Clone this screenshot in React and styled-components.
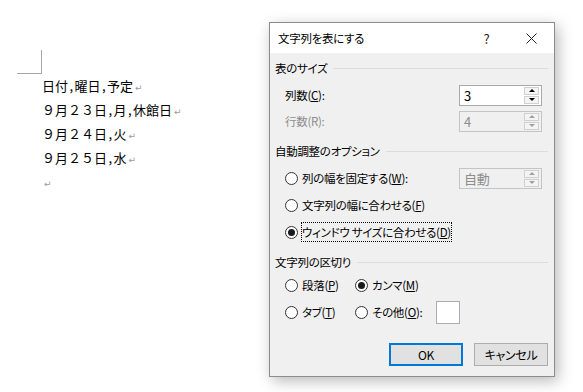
import React from "react";
import styled, { createGlobalStyle } from "styled-components";

const GlobalStyle = createGlobalStyle`
  body {
    margin: 0;
    background: #fff;
    font-family: "Noto Sans CJK JP", "Noto Sans", sans-serif;
  }
`;

const Page = styled.div`
  display: flex;
  align-items: flex-start;
  width: 583px;
  height: 392px;
  overflow: hidden;
`;

const Doc = styled.div`
  width: 269px;
  padding: 50px 0 0 17px;
  box-sizing: border-box;
  font-size: 13px;
  color: #000;
`;

const Corner = styled.div`
  width: 25px;
  height: 24px;
  box-sizing: border-box;
  border-right: 1px solid #a6a6a6;
  border-bottom: 1px solid #a6a6a6;
`;

const Lines = styled.div`
  padding-left: 25px;
`;

const Line = styled.div`
  height: 24px;
  line-height: 24px;
  white-space: nowrap;
`;

const Comma = styled.span`
  display: inline-block;
  width: 6.5px;
  text-align: center;
`;

const Mark = styled.span`
  color: #9a9a9a;
  font-family: "DejaVu Sans", sans-serif;
  font-size: 9px;
  margin-left: 2px;
`;

const Dialog = styled.div`
  margin-top: 22px;
  width: 286px;
  height: 355px;
  box-sizing: border-box;
  border: 1px solid #8c8c8c;
  background: #f0f0f0;
  box-shadow: 3px 4px 14px rgba(0, 0, 0, 0.28);
  display: flex;
  flex-direction: column;
  font-size: 11.5px;
  letter-spacing: -0.3px;
  font-feature-settings: "palt";
  color: #000;
`;

const TitleBar = styled.div`
  height: 30px;
  background: #fff;
  display: flex;
  align-items: center;
  padding-left: 8px;
`;

const TitleText = styled.div`
  flex: 1;
`;

const TitleButton = styled.div`
  width: 45px;
  height: 30px;
  display: flex;
  align-items: center;
  justify-content: center;
  font-size: 13px;
  color: #222;
`;

const Body = styled.div`
  padding: 5px 6px 0 5px;
  display: flex;
  flex-direction: column;
`;

const Heading = styled.div`
  height: 20px;
  margin-top: ${(p) => p.$top || 0}px;
  display: flex;
  align-items: center;
  gap: 6px;
  &::after {
    content: "";
    flex: 1;
    height: 1px;
    background: #dcdcdc;
  }
`;

const Row = styled.div`
  height: ${(p) => p.$h || 22}px;
  margin-top: ${(p) => p.$top || 0}px;
  padding: 0 6px 0 10px;
  display: flex;
  align-items: center;
`;

const Label = styled.div`
  flex: 1;
  color: ${(p) => (p.$disabled ? "#8d8d8d" : "#000")};
`;

const Spin = styled.div`
  width: 83px;
  height: 21px;
  box-sizing: border-box;
  border: 1px solid ${(p) => (p.$disabled ? "#c4c4c4" : "#a9a9a9")};
  background: ${(p) => (p.$disabled ? "#f0f0f0" : "#fff")};
  display: flex;
  align-items: center;
  padding: 1px 1px 1px 4px;
  color: ${(p) => (p.$disabled ? "#8d8d8d" : "#000")};
  font-size: 13px;
`;

const SpinValue = styled.div`
  flex: 1;
`;

const SpinButtons = styled.div`
  width: 15px;
  height: 17px;
  display: flex;
  flex-direction: column;
  gap: 1px;
  margin-right: 1px;
`;

const SpinBtn = styled.div`
  flex: 1;
  box-sizing: border-box;
  border: 1px solid #d0d0d0;
  background: #f4f4f4;
  display: flex;
  align-items: center;
  justify-content: center;
  &::before {
    content: "";
    border-left: 3px solid transparent;
    border-right: 3px solid transparent;
    ${(p) => (p.$down ? "border-top" : "border-bottom")}: 3px solid
      ${(p) => (p.$disabled ? "#a0a0a0" : "#000")};
  }
`;

const Option = styled.div`
  display: flex;
  align-items: center;
  gap: 4px;
  width: ${(p) => (p.$w ? `${p.$w}px` : "auto")};
  flex: ${(p) => (p.$grow ? 1 : "none")};
`;

const Radio = styled.span`
  width: 13px;
  height: 13px;
  box-sizing: border-box;
  border-radius: 50%;
  border: 1px solid #333;
  background: #fff;
  display: flex;
  align-items: center;
  justify-content: center;
  &::after {
    content: "";
    width: 7px;
    height: 7px;
    border-radius: 50%;
    background: ${(p) => (p.$checked ? "#1a1a1a" : "transparent")};
  }
`;

const Focus = styled.span`
  outline: 1px dotted #000;
  padding: 1px 0;
`;

const SmallBox = styled.div`
  width: 24px;
  height: 23px;
  box-sizing: border-box;
  border: 1px solid #abadb3;
  background: #fff;
  margin-left: 14px;
`;

const Buttons = styled.div`
  margin-top: 19px;
  display: flex;
  justify-content: flex-end;
  gap: 11px;
`;

const Button = styled.div`
  width: 74px;
  height: 23px;
  box-sizing: border-box;
  border: ${(p) => (p.$primary ? "2px solid #0078d7" : "1px solid #adadad")};
  background: #e1e1e1;
  display: flex;
  align-items: center;
  justify-content: center;
  font-size: 12px;
`;

function SpinBox({ value, disabled }) {
  return (
    <Spin $disabled={disabled}>
      <SpinValue>{value}</SpinValue>
      <SpinButtons>
        <SpinBtn $disabled={disabled} />
        <SpinBtn $down $disabled={disabled} />
      </SpinButtons>
    </Spin>
  );
}

function DocLine({ text }) {
  const parts = text.split(",");
  return (
    <Line>
      {parts.map((part, i) => (
        <React.Fragment key={i}>
          {i > 0 && <Comma>,</Comma>}
          {part}
        </React.Fragment>
      ))}
      <Mark>↵</Mark>
    </Line>
  );
}

const docLines = ["日付,曜日,予定", "９月２３日,月,休館日", "９月２４日,火", "９月２５日,水", ""];

export default function App() {
  return (
    <Page>
      <GlobalStyle />
      <Doc>
        <Corner />
        <Lines>
          {docLines.map((t, i) => (
            <DocLine key={i} text={t} />
          ))}
        </Lines>
      </Doc>

      <Dialog>
        <TitleBar>
          <TitleText>文字列を表にする</TitleText>
          <TitleButton>?</TitleButton>
          <TitleButton>
            <svg width="11" height="11" viewBox="0 0 11 11">
              <path d="M0.5 0.5 L10.5 10.5 M10.5 0.5 L0.5 10.5" stroke="#222" strokeWidth="1" />
            </svg>
          </TitleButton>
        </TitleBar>
        <Body>
          <Heading>表のサイズ</Heading>
          <Row $top={6}>
            <Label>列数(<u>C</u>):</Label>
            <SpinBox value="3" />
          </Row>
          <Row $top={4}>
            <Label $disabled>行数(R):</Label>
            <SpinBox value="4" disabled />
          </Row>

          <Heading $top={9}>自動調整のオプション</Heading>
          <Row $top={6}>
            <Option $grow>
              <Radio />
              <span>列の幅を固定する(<u>W</u>):</span>
            </Option>
            <SpinBox value="自動" disabled />
          </Row>
          <Row $top={5}>
            <Option>
              <Radio />
              <span>文字列の幅に合わせる(<u>F</u>)</span>
            </Option>
          </Row>
          <Row $top={5}>
            <Option>
              <Radio $checked />
              <Focus>ウィンドウ サイズに合わせる(<u>D</u>)</Focus>
            </Option>
          </Row>

          <Heading $top={9}>文字列の区切り</Heading>
          <Row $top={2}>
            <Option $w={70}>
              <Radio />
              <span>段落(<u>P</u>)</span>
            </Option>
            <Option>
              <Radio $checked />
              <span>カンマ(<u>M</u>)</span>
            </Option>
          </Row>
          <Row $top={4} $h={24}>
            <Option $w={70}>
              <Radio />
              <span>タブ(<u>T</u>)</span>
            </Option>
            <Option>
              <Radio />
              <span>その他(<u>O</u>):</span>
            </Option>
            <SmallBox />
          </Row>

          <Buttons>
            <Button $primary>OK</Button>
            <Button>キャンセル</Button>
          </Buttons>
        </Body>
      </Dialog>
    </Page>
  );
}
